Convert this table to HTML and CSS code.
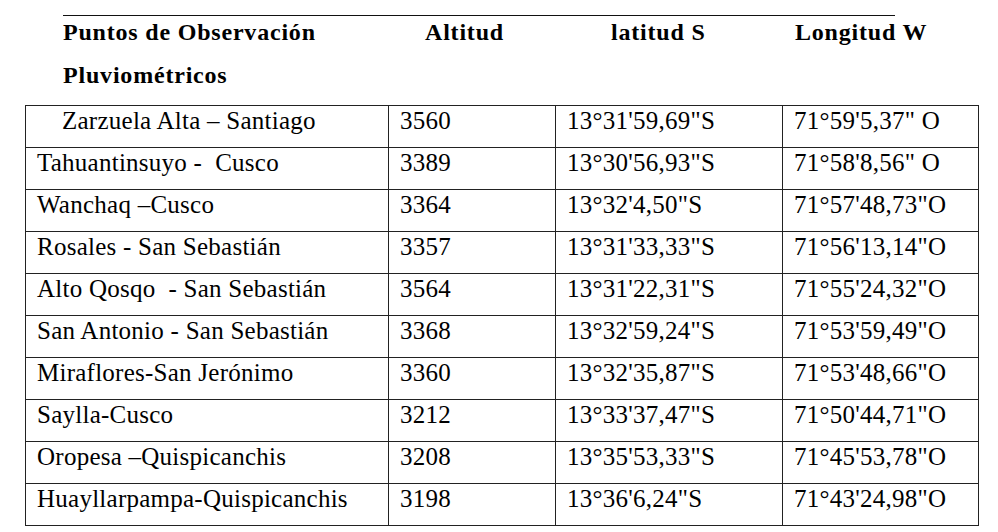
FILE: index.html
```html
<!DOCTYPE html>
<html lang="es">
<head>
<meta charset="utf-8">
<title>Puntos de Observación Pluviométricos</title>
<link rel="stylesheet" href="styles.css">
</head>
<body>
<div class="page">
  <div class="header">
    <div class="hcell hc1"><span class="hl1">Puntos de Observación</span><span class="hl2">Pluviométricos</span></div>
    <div class="hcell hc2"><span class="hl1">Altitud</span></div>
    <div class="hcell hc3"><span class="hl1">latitud S</span></div>
    <div class="hcell hc4"><span class="hl1">Longitud W</span></div>
  </div>
  <table class="data">
    <colgroup>
      <col class="c1"><col class="c2"><col class="c3"><col class="c4">
    </colgroup>
    <tbody>
      <tr><td class="indent">Zarzuela Alta – Santiago</td><td>3560</td><td>13°31'59,69"S</td><td>71°59'5,37" O</td></tr>
      <tr><td>Tahuantinsuyo -&nbsp; Cusco</td><td>3389</td><td>13°30'56,93"S</td><td>71°58'8,56" O</td></tr>
      <tr><td>Wanchaq –Cusco</td><td>3364</td><td>13°32'4,50"S</td><td>71°57'48,73"O</td></tr>
      <tr><td>Rosales - San Sebastián</td><td>3357</td><td>13°31'33,33"S</td><td>71°56'13,14"O</td></tr>
      <tr><td>Alto Qosqo&nbsp; - San Sebastián</td><td>3564</td><td>13°31'22,31"S</td><td>71°55'24,32"O</td></tr>
      <tr><td>San Antonio - San Sebastián</td><td>3368</td><td>13°32'59,24"S</td><td>71°53'59,49"O</td></tr>
      <tr><td>Miraflores-San Jerónimo</td><td>3360</td><td>13°32'35,87"S</td><td>71°53'48,66"O</td></tr>
      <tr><td>Saylla-Cusco</td><td>3212</td><td>13°33'37,47"S</td><td>71°50'44,71"O</td></tr>
      <tr><td>Oropesa –Quispicanchis</td><td>3208</td><td>13°35'53,33"S</td><td>71°45'53,78"O</td></tr>
      <tr><td>Huayllarpampa-Quispicanchis</td><td>3198</td><td>13°36'6,24"S</td><td>71°43'24,98"O</td></tr>
    </tbody>
  </table>
</div>
</body>
</html>
```

FILE: styles.css
```css
html, body {
  margin: 0;
  padding: 0;
  background: #ffffff;
}
body {
  font-family: "Liberation Serif", "Times New Roman", serif;
  color: #000;
}
.page {
  padding-top: 15px;
  padding-left: 25px;
}
.header {
  margin-left: 38px;
  width: 832px;
  border-top: 1px solid #111;
  display: grid;
  grid-template-columns: 362px 186px 184px 100px;
  font-weight: bold;
  font-size: 24px;
  letter-spacing: 0.8px;
  height: 89px;
}
.hcell span {
  display: block;
  line-height: 32px;
  white-space: nowrap;
}
.hl2 {
  margin-top: 11px;
}
.data {
  border-collapse: collapse;
  table-layout: fixed;
  width: 953px;
  font-size: 25px;
  letter-spacing: 0.25px;
}
.c1 { width: 363px; }
.c2 { width: 167px; }
.c3 { width: 227px; }
.c4 { width: 196px; }
.data td {
  border: 1px solid #222;
  height: 42px;
  box-sizing: border-box;
  vertical-align: top;
  padding: 1px 0 0 11px;
  line-height: 27px;
  white-space: nowrap;
}
.data td.indent {
  padding-left: 36px;
}
```
